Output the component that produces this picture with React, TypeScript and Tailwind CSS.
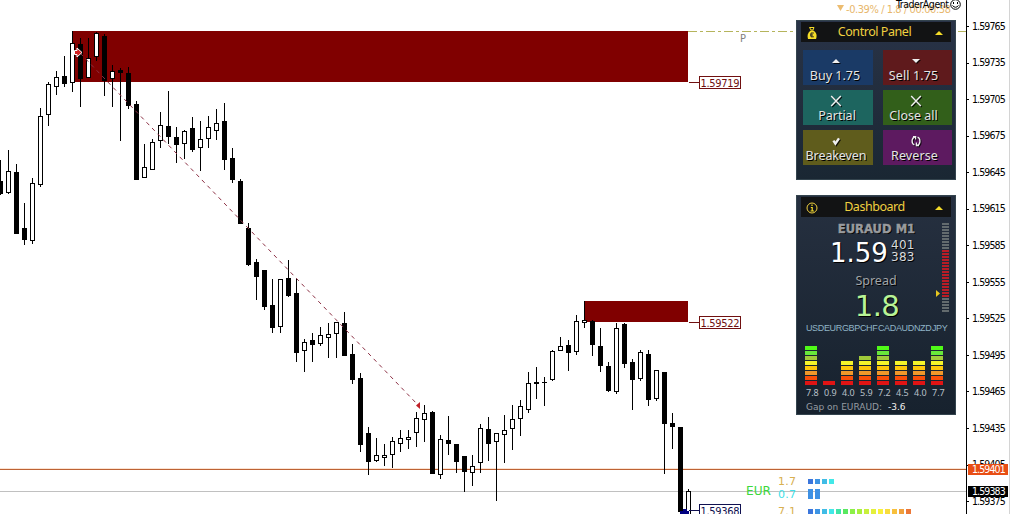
import type { ReactNode } from "react"

type Candle = [high: number, top: number, bottom: number, low: number, up: 0 | 1]

// one candle every 8px, starting at the left edge
const candles: Candle[] = [
  [160, 181, 194, 195, 0], [150, 171, 193, 194, 1], [164, 172, 234, 234, 0], [203, 228, 240, 245, 0],
  [178, 183, 241, 244, 1], [108, 116, 185, 187, 1], [82, 84, 115, 126, 1], [71, 77, 87, 95, 1],
  [56, 76, 84, 87, 0], [31, 43, 83, 92, 1], [38, 44, 79, 107, 0], [38, 58, 78, 78, 1],
  [32, 33, 57, 61, 1], [34, 36, 81, 96, 0], [65, 71, 79, 107, 1], [68, 70, 73, 141, 0],
  [67, 73, 106, 109, 0], [101, 104, 180, 180, 0], [144, 167, 178, 178, 1], [139, 142, 170, 170, 1],
  [112, 125, 141, 148, 1], [91, 126, 137, 144, 0], [127, 137, 145, 163, 0], [130, 131, 144, 159, 1],
  [117, 128, 150, 152, 0], [121, 139, 148, 171, 1], [116, 127, 139, 148, 1], [109, 123, 131, 140, 1],
  [103, 121, 160, 170, 0], [148, 158, 180, 183, 0], [179, 181, 224, 224, 0], [223, 228, 265, 266, 0],
  [259, 262, 277, 300, 0], [270, 270, 307, 310, 0], [279, 305, 328, 333, 0], [279, 279, 327, 333, 1],
  [260, 278, 296, 297, 0], [279, 293, 353, 362, 0], [339, 342, 351, 372, 1], [333, 340, 345, 362, 0],
  [327, 335, 344, 346, 1], [323, 334, 338, 358, 1], [322, 322, 334, 358, 1], [312, 323, 356, 356, 0],
  [344, 354, 380, 384, 0], [373, 378, 445, 452, 0], [427, 433, 462, 475, 0], [438, 455, 461, 462, 1],
  [444, 455, 458, 466, 1], [437, 441, 455, 468, 1], [430, 438, 444, 452, 1], [430, 437, 440, 449, 1],
  [412, 418, 433, 447, 1], [405, 413, 420, 442, 1], [411, 412, 474, 474, 0], [435, 439, 475, 479, 1],
  [416, 440, 444, 455, 0], [444, 444, 462, 473, 0], [456, 456, 472, 492, 0], [455, 466, 473, 486, 1],
  [424, 428, 463, 473, 1], [417, 429, 444, 461, 0], [433, 433, 442, 501, 1], [415, 430, 435, 463, 1],
  [405, 419, 429, 450, 1], [400, 406, 419, 436, 1], [372, 383, 410, 413, 1], [367, 382, 384, 399, 0],
  [377, 382, 383, 406, 0], [350, 351, 380, 381, 1], [337, 346, 351, 351, 1], [340, 345, 353, 371, 0],
  [315, 321, 352, 355, 1], [301, 320, 323, 328, 1], [320, 321, 345, 356, 0], [328, 346, 366, 372, 0],
  [362, 366, 391, 392, 0], [323, 328, 392, 394, 1], [323, 324, 364, 368, 0], [359, 362, 380, 410, 0],
  [350, 352, 379, 381, 1], [350, 354, 400, 406, 0], [370, 370, 399, 401, 1], [372, 372, 424, 474, 0],
  [413, 423, 427, 449, 0], [427, 427, 512, 514, 0], [489, 491, 516, 516, 1],
]

const axisPrices = [
  "1.59765", "1.59735", "1.59705", "1.59675", "1.59645", "1.59615", "1.59585",
  "1.59555", "1.59525", "1.59495", "1.59465", "1.59435", "1.59405", "1.59375",
]

const meterColors = [
  "#3b76dc", "#3d94e4", "#40bce6", "#42e8e8", "#40e4a8", "#58e860", "#8cf048", "#a8f03c",
  "#c8f03c", "#e4f03c", "#f8f03c", "#f8dc3c", "#f8c03c", "#f0a03c", "#ec7838",
]

const segmentColors = ["#e01414", "#f84e08", "#f0982a", "#fcc60a", "#f4f42a", "#a0ca3a", "#68e83a", "#50fa18"]

const currencies = [
  { code: "USD", value: "7.8", level: 8 },
  { code: "EUR", value: "0.9", level: 1 },
  { code: "GBP", value: "4.0", level: 5 },
  { code: "CHF", value: "5.9", level: 6 },
  { code: "CAD", value: "7.2", level: 8 },
  { code: "AUD", value: "4.5", level: 5 },
  { code: "NZD", value: "4.0", level: 5 },
  { code: "JPY", value: "7.7", level: 8 },
]

const glyphUp = <path d="M0 4 L4 0 L8 4Z" fill="#f0f0f0" />
const glyphDown = <path d="M0 0 L8 0 L4 4Z" fill="#f0f0f0" />
const glyphCross = <path d="M-.8 -3 L8.8 7 M8.8 -3 L-.8 7" stroke="#f0f0f0" strokeWidth="1.4" />
const glyphCheck = <path d="M1.4 1.6 L3.4 4.6 L7 -.6" stroke="#f0f0f0" strokeWidth="2.4" fill="none" />
const glyphCycle = (
  <path
    d="M3 -2.2 C-.8 -1.2 -.8 4.8 2.4 6 M5 6.4 C8.8 5.4 8.8 -.6 5.6 -1.8 M1 -2.4 H3.6 V.6 M7 6.6 H4.4 V3.6"
    stroke="#f0f0f0"
    strokeWidth="1.3"
    fill="none"
  />
)

const buttons = [
  { label: "Buy 1.75", glyph: glyphUp, style: "bg-[#1a3a66]", text: "tracking-[0px] -ml-1.5" },
  { label: "Sell 1.75", glyph: glyphDown, style: "bg-[#5f1a1c]", text: "tracking-[0.1px] -ml-2" },
  { label: "Partial", glyph: glyphCross, style: "bg-[#1d655f]", text: "tracking-[0px] -ml-0.5" },
  { label: "Close all", glyph: glyphCross, style: "bg-[#325f1a]", text: "tracking-[0px] -ml-2" },
  { label: "Breakeven", glyph: glyphCheck, style: "bg-[#5f5c1c]", text: "tracking-[-0.1px] -ml-1" },
  { label: "Reverse", glyph: glyphCycle, style: "bg-[#5d1a60]", text: "tracking-[0.1px] -ml-1.5" },
]

function PriceTag({ y, price, color }: { y: number; price: string; color: string }) {
  return (
    <g>
      <path d={`M689 ${y - 0.5} H699`} stroke={color} />
      <rect x="699.5" y={y - 6.5} width="41" height="12" fill="#fff" stroke={color} />
      <text x="700.5" y={y + 4} fontSize="11" textLength="39" fill={color}>{price}</text>
    </g>
  )
}

function Chart() {
  return (
    <svg width="966" height="514" className="block font-['DejaVu_Sans_Condensed','DejaVu_Sans',sans-serif]">
      <path d="M688 31.5 H966" stroke="#b5b45c" strokeDasharray="9 3 3 3" shapeRendering="crispEdges" />
      <path d="M0 468.5 H966" stroke="#fbe3d2" />
      <path d="M0 469.5 H966" stroke="#bd6235" />
      <path d="M0 491.5 H966" stroke="#c0c0c0" />
      <rect x="72" y="31" width="616" height="51" fill="#800000" />
      <rect x="584" y="301" width="104" height="21" fill="#800000" />
      <g shapeRendering="crispEdges">
        {candles.map(([high, top, bottom, low, up], i) => (
          <g key={i}>
            <rect x={i * 8} y={high} width="1" height={low - high} />
            <rect x={i * 8 - 2} y={top} width="5" height={bottom - top} />
            {up === 1 && <rect x={i * 8 - 1} y={top + 1} width="3" height={bottom - top - 2} fill="#fff" />}
          </g>
        ))}
      </g>
      <path d="M80 53 L418 405" stroke="#8c3044" strokeDasharray="4 4" />
      <path d="M74.5 50.5 H77 V48 L82 52.5 L77 57 V54.5 H74.5Z" fill="#d22020" stroke="#fff" />
      <path d="M420 402 V409 L416 405.5Z" fill="#c02028" />

      <text x="740" y="42" fontSize="11" fill="#808080">P</text>
      <PriceTag y={83} price="1.59719" color="#701010" />
      <PriceTag y={323} price="1.59522" color="#701010" />
      <path d="M680 514 V511 H683 V509 H687 V511 H689 V514Z" fill="#000080" />
      <PriceTag y={511} price="1.59368" color="#101050" />

      <text x="746" y="495" fontSize="12.5" textLength="25" lengthAdjust="spacingAndGlyphs" fill="#3cd83c">EUR</text>
      <g fontSize="11" className="font-['DejaVu_Sans',sans-serif]">
        <text x="778" y="485" textLength="18" fill="#d8b050">1.7</text>
        <text x="778" y="498" textLength="18" fill="#40e0e8">0.7</text>
        <text x="778" y="515" textLength="18" fill="#d8b050">7.1</text>
      </g>
      {meterColors.slice(0, 4).map((c, i) => (
        <rect key={c} x={808 + i * 7} y="479" width="5" height="5" fill={c} />
      ))}
      {[0, 1].map((i) => (
        <rect key={i} x={808 + i * 7} y="489" width="5" height="10" fill="#3d90e4" />
      ))}
      {meterColors.map((c, i) => (
        <rect key={c} x={808 + i * 7} y="509" width="5" height="5" fill={c} />
      ))}

      <path d="M837 5 H844 L840.5 11Z" fill="#ecbc70" />
      <text x="846" y="12.5" fontSize="11" textLength="105" fill="#e8b76c">-0.39% / 1.8 / 00:00:38</text>
      <text x="896" y="7.5" fontSize="10.5" textLength="53" fill="#000">TraderAgent</text>
      <g fill="none" stroke="#000">
        <circle cx="955.5" cy="4.5" r="4.8" />
        <path d="M953.5 2 V4 M957.5 2 V4 M952.5 5.5 Q955.5 9 958.5 5.5" />
      </g>
    </svg>
  )
}

function PriceAxis() {
  return (
    <div className="relative w-[45px] border-l border-black bg-white pt-[8.4px] font-['DejaVu_Sans_Condensed','DejaVu_Sans',sans-serif] text-[10.5px] tracking-[-0.9px] text-black">
      {axisPrices.map((price) => (
        <div key={price} className="flex h-[36.54px] items-center gap-[3px]">
          <span className="h-px w-0.5 bg-black" />
          {price}
        </div>
      ))}
      <div className="absolute left-px top-[464px] h-[11px] w-10 bg-[#e84e14] pl-1 leading-[11px] text-white">1.59401</div>
      <div className="absolute left-px top-[486px] h-[11px] w-10 bg-black pl-1 leading-[11px] text-white">1.59383</div>
      <div className="absolute right-px top-0 h-full w-px bg-[#d4d4d4]" />
    </div>
  )
}

function PanelHeader({ title, icon }: { title: string; icon: ReactNode }) {
  return (
    <div className="mx-1 flex h-5 items-center bg-[#121314] pl-[5px] pr-2 text-[#f0d040]">
      {icon}
      <span className="flex-1 pr-1 text-center text-[12.5px] leading-5 tracking-[-0.45px]">{title}</span>
      <svg width="8" height="4" className="mt-0.5">
        <path d="M0 4 L4 0 L8 4Z" fill="#f4dc28" />
      </svg>
    </div>
  )
}

function ControlPanel() {
  return (
    <section className="h-40 border border-[#34444e] bg-gradient-to-b from-[#293347] to-[#1a2733] pt-px">
      <PanelHeader
        title="Control Panel"
        icon={
          <svg width="12" height="13" className="mt-0.5">
            <path d="M3.5 .5 H8 L7 3 H5Z" fill="none" stroke="#f4dc28" />
            <path d="M4.5 3.5 H7.5 C11 6 11 9 10 12 H2 C1 9 1.5 6 4.5 3.5Z" fill="#f4dc28" />
            <path d="M7.8 6 H5 V9.8 H7.8 M4 8 H7" fill="none" stroke="#222" />
          </svg>
        }
      />
      <div className="ml-1.5 mt-2 grid w-[150px] grid-cols-[70px_69px] gap-x-2.5 gap-y-[5px]">
        {buttons.map((b) => (
          <button key={b.label} className={`flex h-[35px] flex-col items-center text-[#e4e4e4] ${b.style}`}>
            <svg width="8" height="4" className="-ml-1 mt-[9px] shrink-0 overflow-visible drop-shadow-[1px_1px_0_rgba(0,0,0,0.8)]">
              {b.glyph}
            </svg>
            <span className={`mt-[5px] whitespace-nowrap text-[12.5px] leading-4 [text-shadow:1px_1px_0_#000] ${b.text}`}>
              {b.label}
            </span>
          </button>
        ))}
      </div>
    </section>
  )
}

function LevelScale() {
  return (
    <div className="absolute right-1.5 top-[27px] flex flex-col gap-px">
      {Array.from({ length: 30 }, (_, i) => (
        <span key={i} className={`h-0.5 w-[7px] ${i >= 9 && i < 25 ? "bg-[#b81c26]" : "bg-[#636b6e]"}`} />
      ))}
      <svg width="4" height="7" className="absolute -left-1.5 top-[67px]">
        <path d="M0 0 L4 3.5 L0 7Z" fill="#e8c820" />
      </svg>
    </div>
  )
}

function Dashboard() {
  return (
    <section className="relative h-[220px] border border-[#34444e] bg-gradient-to-b from-[#263040] to-[#17222e] pt-px">
      <PanelHeader
        title="Dashboard"
        icon={
          <svg width="12" height="12" className="mt-0.5">
            <circle cx="6" cy="6" r="5" fill="none" stroke="#f0d040" />
            <path d="M6 2.5 V4 M4.8 5.5 H6.2 V9 M4.5 9 H8" fill="none" stroke="#f4dc28" strokeWidth="1.2" />
          </svg>
        }
      />
      <LevelScale />
      <div className="mt-[5px] pl-px text-center font-['DejaVu_Sans',sans-serif] text-[11.5px] font-black leading-[14px] tracking-[0.05px] text-[#999b9e] [-webkit-text-stroke:0.4px_#999b9e] [text-shadow:1px_1px_0_#000]">
        EURAUD M1
      </div>
      <div className="ml-[33px] mt-[3px] flex h-[27px] font-['DejaVu_Sans',sans-serif] text-white [text-shadow:1px_1px_0_#000]">
        <span className="w-[61px] text-[26px] leading-[29px]">1.59</span>
        <span className="text-[12px] leading-3 tracking-[0.3px] text-[#d8dadd]">
          401
          <br />
          383
        </span>
      </div>
      <div className="mt-[7px] text-center text-[12.5px] leading-4 tracking-[0px] text-[#a0a4a8] [text-shadow:1px_1px_0_#000]">Spread</div>
      <div className="-mt-px pl-0.5 text-center font-['DejaVu_Sans',sans-serif] text-[29px] leading-9 tracking-[-0.5px] text-[#b8f496] [text-shadow:1px_1px_0_#000]">
        1.8
      </div>
      <div className="-mt-[2px] ml-2 grid w-36 grid-cols-8 font-['Liberation_Sans',sans-serif] text-[9px] leading-3 tracking-[-0.4px] text-[#90b4c6]">
        {currencies.map((c) => (
          <span key={c.code} className="whitespace-nowrap pl-px">{c.code}</span>
        ))}
      </div>
      <div className="ml-2 mt-3 grid h-[39px] w-36 grid-cols-8">
        {currencies.map((c) => (
          <div key={c.code} className="flex flex-col-reverse gap-px">
            {segmentColors.slice(0, c.level).map((color) => (
              <span key={color} className="h-1 w-3" style={{ backgroundColor: color }} />
            ))}
          </div>
        ))}
      </div>
      <div className="ml-2 mt-0.5 grid w-36 grid-cols-8 text-[9px] leading-3 text-[#b8c0c8]">
        {currencies.map((c) => (
          <span key={c.code} className="pl-px">{c.value}</span>
        ))}
      </div>
      <div className="ml-[9px] mt-0.5 flex gap-1.5 font-['DejaVu_Sans',sans-serif] text-[9px] leading-3">
        <span className="w-[76px] whitespace-nowrap tracking-[0px] text-[#969ca2]">Gap on EURAUD:</span>
        <span className="text-[#f0f0f0]">-3.6</span>
      </div>
    </section>
  )
}

export default function App() {
  return (
    <div className="flex h-[514px] w-[1011px] overflow-hidden bg-white">
      <main className="relative w-[966px]">
        <Chart />
        <aside className="absolute left-[796px] top-5 flex w-40 flex-col gap-[15px] font-['Noto_Sans',sans-serif]">
          <ControlPanel />
          <Dashboard />
        </aside>
      </main>
      <PriceAxis />
    </div>
  )
}
